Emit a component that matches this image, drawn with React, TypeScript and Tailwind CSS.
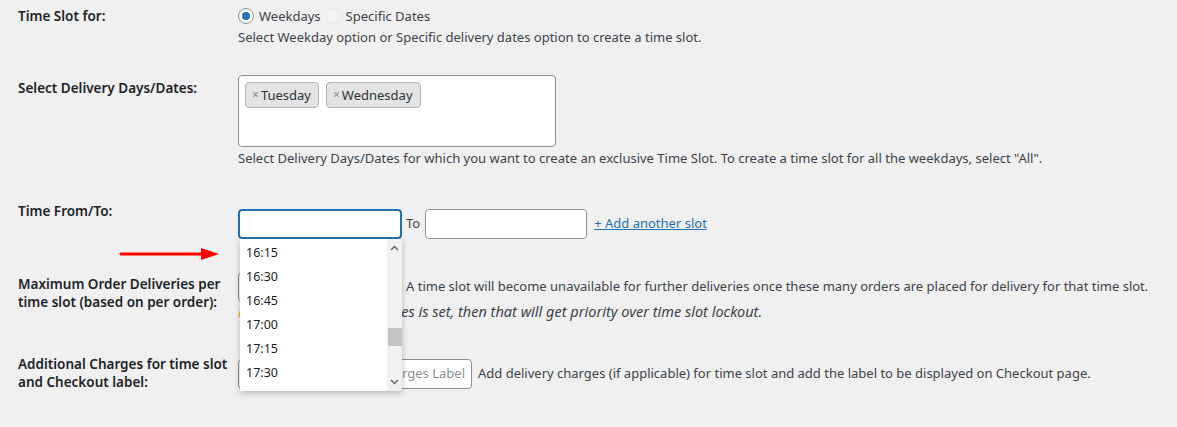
import React from "react";

const FONT = { fontFamily: '"Segoe UI", "Noto Sans", "Open Sans", sans-serif' };

function Label({ children, className = "" }: { children: React.ReactNode; className?: string }) {
  return (
    <div className={`w-[238px] shrink-0 pl-[18px] pr-[2px] text-[13.5px] font-semibold text-[#1d2327] ${className}`}>
      {children}
    </div>
  );
}

function Tag({ text }: { text: string }) {
  return (
    <span className="flex h-[26px] items-center rounded-[4px] border border-[#b4b4b4] bg-[#e4e4e4] pl-[6px] pr-[7px] text-[13px] text-[#2c3338]">
      <span className="mr-[2px] text-[12px] text-[#8a8a8a]">×</span>
      {text}
    </span>
  );
}

const times = ["16:15", "16:30", "16:45", "17:00", "17:15", "17:30"];

export default function App() {
  return (
    <div className="relative h-[427px] w-[1177px] overflow-hidden bg-[#f0f0f0] text-[13px] text-[#3c434a]" style={FONT}>
      {/* Row 1 */}
      <div className="flex pt-[6px]">
        <Label className="leading-[20px]">Time Slot for:</Label>
        <div className="leading-[20px]">
          <div className="flex h-[20px] items-center">
            <span className="flex h-[16px] w-[16px] items-center justify-center rounded-full border border-[#8c8f94] bg-white">
              <span className="h-[8px] w-[8px] rounded-full bg-[#2271b1]" />
            </span>
            <span className="ml-[5px] text-[#3c434a]">Weekdays</span>
            <span className="ml-[5px] h-[16px] w-[16px] rounded-full border border-[#e8e8e8] bg-[#f3f3f3]" />
            <span className="ml-[4px] text-[#3c434a]">Specific Dates</span>
          </div>
          <div className="mt-[1px]">Select Weekday option or Specific delivery dates option to create a time slot.</div>
        </div>
      </div>

      {/* Row 2 */}
      <div className="mt-[28px] flex">
        <Label className="pt-[3px] leading-[20px]">Select Delivery Days/Dates:</Label>
        <div className="leading-[20px]">
          <div className="h-[72px] w-[318px] rounded-[4px] border border-[#8c8f94] bg-white p-[6px]">
            <div className="flex gap-[7px]">
              <Tag text="Tuesday" />
              <Tag text="Wednesday" />
            </div>
          </div>
          <div className="mt-[1px]">
            Select Delivery Days/Dates for which you want to create an exclusive Time Slot. To create a time slot for all the weekdays, select "All".
          </div>
        </div>
      </div>

      {/* Row 3 */}
      <div className="mt-[33px] flex">
        <Label className="leading-[20px]">Time From/To:</Label>
        <div className="flex items-center pt-[8px]">
          <div className="h-[30px] w-[164px] rounded-[4px] border-2 border-[#2271b1] bg-white" />
          <span className="ml-[4px] mr-[5px]">To</span>
          <div className="h-[30px] w-[162px] rounded-[4px] border border-[#8c8f94] bg-white" />
          <a className="ml-[7px] text-[#2271b1] underline" href="#">+ Add another slot</a>
        </div>
      </div>

      {/* Row 4 */}
      <div className="mt-[33px] flex">
        <Label className="pt-[3px] leading-[18px]">
          Maximum Order Deliveries per time slot (based on per order):
        </Label>
        <div>
          <div className="flex items-center">
            <div className="h-[30px] w-[163px] shrink-0 rounded-[4px] border border-[#8c8f94] bg-white" />
            <span className="ml-[5px] whitespace-nowrap">
              A time slot will become unavailable for further deliveries once these many orders are placed for delivery for that time slot.
            </span>
          </div>
          <div className="mt-[-1px] whitespace-nowrap text-[14.5px] leading-[20px] italic">
            <span className="tracking-[-0.3px]">
              <span className="text-[#dba617]">Note:</span> If Max Order Deliveri
            </span>
            es is set, then that will get priority over time slot lockout.
          </div>
        </div>
      </div>

      {/* Row 5 */}
      <div className="mt-[34px] flex">
        <Label className="leading-[18px]">Additional Charges for time slot and Checkout label:</Label>
        <div className="flex items-center pt-[2px]">
          <div className="h-[30px] w-[129px] shrink-0 rounded-[4px] border border-[#8c8f94] bg-white" />
          <div className="ml-[5px] flex h-[30px] w-[100px] shrink-0 items-center justify-end overflow-hidden whitespace-nowrap rounded-[4px] border border-[#8c8f94] bg-white pr-[6px] text-[#8a8f94]">
            Charges Label
          </div>
          <span className="ml-[6px] whitespace-nowrap">Add delivery charges (if applicable) for time slot and add the label to be displayed on Checkout page.</span>
        </div>
      </div>

      {/* Dropdown overlay */}
      <div className="absolute left-[240px] top-[239px] flex h-[152px] w-[162px] bg-white shadow-[0_2px_6px_rgba(0,0,0,0.25)]">
        <div className="flex-1 pt-[2px]">
          {times.map((t) => (
            <div key={t} className="flex h-[24px] items-center pl-[6px] text-[12.5px] text-[#1d1d1d]">
              {t}
            </div>
          ))}
        </div>
        <div className="relative w-[15px] bg-[#f1f1f1]">
          <svg className="absolute left-[3px] top-[6px]" width="9" height="6" viewBox="0 0 9 6">
            <path d="M1 5 L4.5 1.5 L8 5" fill="none" stroke="#606060" strokeWidth="1.4" />
          </svg>
          <div className="absolute left-[1px] top-[89px] h-[18px] w-[14px] bg-[#c4c4c4]" />
          <svg className="absolute bottom-[6px] left-[3px]" width="9" height="6" viewBox="0 0 9 6">
            <path d="M1 1 L4.5 4.5 L8 1" fill="none" stroke="#606060" strokeWidth="1.4" />
          </svg>
        </div>
      </div>

      {/* Red arrow */}
      <svg className="absolute left-[118px] top-[245px]" width="104" height="18" viewBox="0 0 104 18">
        <line x1="3" y1="9" x2="86" y2="9" stroke="#ff0000" strokeWidth="3" strokeLinecap="round" />
        <polygon points="83,3 101,9 83,15" fill="#ff0000" />
      </svg>
    </div>
  );
}
